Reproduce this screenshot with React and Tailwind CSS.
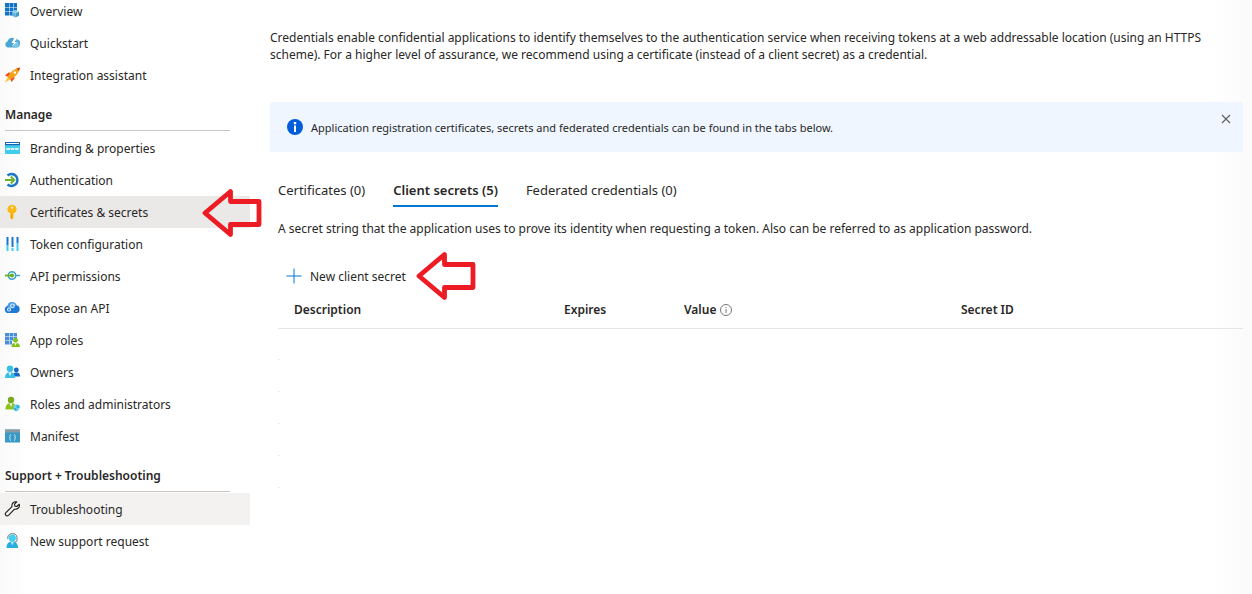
import React from 'react';
import clsx from 'clsx';

const Icon = ({ children }) => (
  <svg viewBox="0 0 16 16" className="size-4 shrink-0" aria-hidden="true">
    {children}
  </svg>
);

const OverviewIcon = () => (
  <Icon>
    <path fill="#1173c7" d="M1 0h4v4H1zM5.5 0h4v4h-4zM10 0h3v4h-3zM1 4.500h4v4H1zM5.500 4.500h4v4h-4zM10 4.500h3v3h-3zM1 9h4v3.500H1zM5.500 9H8v3.500H5.500z" />
    <path fill="#8fd0ee" d="M11.500 7l3.500 1.700-3.500 1.800L8 8.700z" />
    <path fill="#5fb4dd" d="M8 8.700l3.500 1.800V14.500L8 12.700z" />
    <path fill="#3c9bcd" d="M15 8.700l-3.500 1.800V14.500l3.500-1.800z" />
  </Icon>
);

const QuickstartIcon = () => (
  <Icon>
    <path fill="#4aa5d4" d="M4 12.500a3.100 3.100 0 0 1-.6-6A4.800 4.800 0 0 1 9.500 3L12 4.200A3.800 3.800 0 0 1 15.900 9 3.700 3.700 0 0 1 12.500 12.500z" />
    <path fill="#7cc8e8" d="M11 3.500l2 .2-.3 2.300A3.500 3.500 0 0 1 12.500 12.500H8.500L13 6.500z" />
    <path fill="#fff" d="M10.300 3L7.500 8h2.300l-2 4L12.800 7h-2.200L13 3z" />
  </Icon>
);

const RocketIcon = () => (
  <Icon>
    <path fill="#e8531f" d="M1 8.500L4.500 5.500l4 .5-4 4zM7.500 15l3-3.500-.5-4-4 4z" />
    <path fill="#f9a01b" d="M3.500 10.500C6 5 10 1.500 16 .5c-.8 5.500-4.500 9.500-10 12z" />
    <path fill="#c3421b" d="M12.500 1.500L16 .5l-1 3.500z" />
    <path fill="#ffc52d" d="M3.500 10.500l2.500 2L.8 15.500z" />
    <circle cx="10.800" cy="5.500" r="1.300" fill="#fff" />
  </Icon>
);

const BrandingIcon = () => (
  <Icon>
    <path fill="#42cdee" d="M1 2h15v12H1z" />
    <path fill="#1762b4" d="M1 2h15v3.200H1z" />
    <path fill="#fff" d="M2 3h13v1H2z" />
    <path fill="none" stroke="#fff" strokeWidth=".9" d="M2.500 8l.8 2 .8-2 .8 2 .8-2M6.800 8l.8 2 .8-2 .8 2 .8-2M11.200 8l.8 2 .8-2 .8 2 .8-2" />
  </Icon>
);

const AuthIcon = () => (
  <Icon>
    <path fill="none" stroke="#1976c8" strokeWidth="2.400" d="M3.500 3.500A6 6 0 1 1 3.500 12.500" />
    <path fill="none" stroke="#6db526" strokeWidth="2" d="M1 8h9M6.800 4.500L10.300 8l-3.500 3.500" />
  </Icon>
);

const KeyIcon = () => (
  <Icon>
    <path fill="#fcb813" d="M8 1a4.500 4.300 0 0 0-1.700 8.300V14L8 15.500 9.700 14v-1l-.9-.9.9-.9V9.300A4.500 4.300 0 0 0 8 1z" />
    <circle cx="8" cy="3.600" r="1.200" fill="#fff0c0" />
    <path stroke="#e28a05" strokeWidth=".8" d="M7.500 10v4.500" />
  </Icon>
);

const TokenIcon = () => (
  <Icon>
    <path fill="#1976d2" d="M2.500 1h2v8h-2zM7.500 1h2v10h-2zM12.500 1h2v6h-2z" />
    <path fill="#42cdee" d="M2.500 9h2v6h-2zM7.500 12h2v3h-2zM12.500 7h2v8h-2z" />
  </Icon>
);

const PermissionsIcon = () => (
  <Icon>
    <circle cx="8" cy="7.500" r="3.700" fill="#fff" stroke="#3b9fc9" strokeWidth="1.500" />
    <path stroke="#62b01e" strokeWidth="1.800" d="M1 7.500h7" />
    <path stroke="#3b9fc9" strokeWidth="1.400" d="M12 7.500h4" />
    <circle cx="8" cy="7.500" r="2" fill="#62b01e" />
  </Icon>
);

const CloudIcon = () => (
  <Icon>
    <path fill="#1f7ad6" d="M4.300 13A3.500 3.500 0 0 1 3.500 6.100 4.800 4.800 0 0 1 12.600 5.200 4 4 0 0 1 12.500 13z" />
    <path fill="#4b9ded" d="M3.500 6.100A4.800 4.800 0 0 1 12.600 5.200L9 6.500 5 9z" />
    <circle cx="8.500" cy="5.800" r="1.800" fill="none" stroke="#d6eafc" strokeWidth="1.200" />
    <circle cx="5" cy="9.500" r="1.500" fill="none" stroke="#d6eafc" strokeWidth="1.200" />
  </Icon>
);

const AppRolesIcon = () => (
  <Icon>
    <path fill="#4a8fdc" d="M1 1h4v3.500H1zM5.500 1h3.500v3.500H5.500zM9.500 1H13v3.500H9.500zM1 5h4v3.500H1zM5.500 5h3.500v3.500H5.500zM9.500 5H13v3H9.500zM1 9h4v3.500H1zM5.500 9H8v3.500H5.500z" />
    <circle cx="11.500" cy="8.200" r="2.400" fill="#7cc31a" />
    <path fill="#7cc31a" d="M7.500 15c0-3 1.500-4.300 4-4.300S16 12 16 15z" />
    <path fill="#e9f7d4" d="M10.200 10.900h2.600L11.500 14z" />
  </Icon>
);

const OwnersIcon = () => (
  <Icon>
    <circle cx="12.300" cy="6" r="2.400" fill="#1467c2" />
    <path fill="#1467c2" d="M8.500 12.500c0-2.800 1-4 3.800-4S16 9.700 16 12.500z" />
    <circle cx="6" cy="4.800" r="3.200" fill="#39bfe6" />
    <path fill="#39bfe6" d="M1 14c0-4 1.800-5.800 5-5.800s5.200 1.800 5.200 5.800z" />
    <path fill="#fff" d="M4.600 8.400h2.800L6 12z" />
  </Icon>
);

const RolesIcon = () => (
  <Icon>
    <circle cx="7" cy="4" r="3.200" fill="#7ba81c" />
    <path fill="#8cc220" d="M1.500 13.500c0-4.200 1.800-6.400 5.500-6.400s5.500 2.200 5.500 6.400z" />
    <path fill="#f2f9e0" d="M5.500 7.300h3L7 11z" />
    <path fill="#6fd3f0" d="M12.500 8.500l3 1v2.500c0 1.500-1.300 2.600-3 3.300-1.700-.7-3-1.800-3-3.300V9.500z" />
    <path fill="#35b0dc" d="M12.500 8.500l3 1v2.500h-3zM12.500 12v3.300c-1.700-.7-3-1.800-3-3.300z" />
  </Icon>
);

const ManifestIcon = () => (
  <Icon>
    <path fill="#3999c6" d="M1 1.500h15v13H1z" />
    <path fill="#8e9aa3" d="M1 1.500h15v3H1z" />
    <path fill="none" stroke="#c9e6f4" strokeWidth="1" d="M7 6.500c-1.200 0-.8 1-.9 2 0 .6-.3 1-.9 1 .6 0 .9.400.9 1 0 1-.3 2 .9 2M10 6.500c1.200 0 .8 1 .9 2 0 .6.300 1 .9 1-.6 0-.9.400-.9 1 0 1 .3 2-.9 2" />
  </Icon>
);

const WrenchIcon = () => (
  <Icon>
    <path
      fill="none"
      stroke="#1b1a19"
      strokeWidth="1.100"
      strokeLinejoin="round"
      d="M15.200 3.200L12.900 5.500 10.900 5.100 10.500 3.100 12.800.9C10 .2 7.400 2.300 8 5.600L1.900 11.700c-1.700 1.900.8 4.300 2.600 2.600L10.500 8.200c3.300.6 5.700-2.200 4.700-5z"
    />
  </Icon>
);

const SupportIcon = () => (
  <Icon>
    <path fill="none" stroke="#6d7175" strokeWidth="1" d="M3.800 6V4.500C3.800-.7 13 -.7 13 4.500V7c0 1.500-1 2-2.500 2" />
    <circle cx="8.300" cy="5" r="3.600" fill="#3fd0f2" />
    <path fill="#28aedd" d="M2.500 15c0-4 1.800-6.500 5.800-6.500s5.700 2.500 5.700 6.500z" />
    <path fill="#b9ecfa" d="M6.800 9h3l-1.500 3.500z" />
  </Icon>
);

const NAV_GROUPS = [
  {
    items: [
      { label: 'Overview', icon: OverviewIcon },
      { label: 'Quickstart', icon: QuickstartIcon },
      { label: 'Integration assistant', icon: RocketIcon },
    ],
  },
  {
    title: 'Manage',
    items: [
      { label: 'Branding & properties', icon: BrandingIcon },
      { label: 'Authentication', icon: AuthIcon },
      { label: 'Certificates & secrets', icon: KeyIcon, active: true, pointed: true },
      { label: 'Token configuration', icon: TokenIcon },
      { label: 'API permissions', icon: PermissionsIcon },
      { label: 'Expose an API', icon: CloudIcon },
      { label: 'App roles', icon: AppRolesIcon },
      { label: 'Owners', icon: OwnersIcon },
      { label: 'Roles and administrators', icon: RolesIcon },
      { label: 'Manifest', icon: ManifestIcon },
    ],
  },
  {
    title: 'Support + Troubleshooting',
    items: [
      { label: 'Troubleshooting', icon: WrenchIcon, hovered: true },
      { label: 'New support request', icon: SupportIcon },
    ],
  },
];

const TABS = [
  { label: 'Certificates (0)' },
  { label: 'Client secrets (5)', active: true },
  { label: 'Federated credentials (0)' },
];

function PointerArrow({ className }) {
  return (
    <svg viewBox="0 0 60 50" className={clsx('absolute h-[50px] w-[60px]', className)} aria-hidden="true">
      <path
        fill="none"
        stroke="#ed1c24"
        strokeWidth="4.800"
        strokeLinejoin="round"
        d="M3 25L28.500 3.500V13.500H57V36.500H28.500V46.500z"
      />
    </svg>
  );
}

function NavItem({ item }) {
  const ItemIcon = item.icon;

  return (
    <li className="relative">
      <a
        href="#"
        className={clsx(
          'flex h-8 items-center gap-2.5 pl-1',
          item.active && 'bg-[#ebe9e8]',
          item.hovered && 'bg-[#f3f2f1]'
        )}
      >
        <ItemIcon />
        <span>{item.label}</span>
      </a>
      {item.pointed && <PointerArrow className="-top-2 left-[202px]" />}
    </li>
  );
}

function Sidebar() {
  return (
    <nav className="-mt-[5px] w-[250px] shrink-0">
      {NAV_GROUPS.map((group, i) => (
        <section key={i}>
          {group.title && (
            <h2 className="mr-5 mb-px ml-[5px] flex h-10 items-center border-b border-[#c8c6c4] pt-2 font-semibold">
              {group.title}
            </h2>
          )}
          <ul>
            {group.items.map((item) => (
              <NavItem key={item.label} item={item} />
            ))}
          </ul>
        </section>
      ))}
    </nav>
  );
}

function InfoBanner() {
  return (
    <div className="mt-[39px] flex h-[50px] rounded-xs bg-[#eff6ff] pr-3 pl-[17px]">
      <div className="flex flex-1 items-center gap-2">
        <svg viewBox="0 0 16 16" className="size-4 shrink-0" aria-hidden="true">
          <circle cx="8" cy="8" r="8" fill="#015cda" />
          <path fill="#fff" d="M7 6.500h2V13H7zM6.800 3h2.400v2.200H6.800z" />
        </svg>
        <p className="text-[11px]">
          Application registration certificates, secrets and federated credentials can be found in the tabs below.
        </p>
      </div>
      <button type="button" aria-label="Close" className="mt-3 h-2.5 w-2.5">
        <svg viewBox="0 0 10 10" className="size-2.5">
          <path stroke="#605e5c" strokeWidth="1.100" d="M1 1l8 8M9 1l-8 8" />
        </svg>
      </button>
    </div>
  );
}

function SecretsTable() {
  return (
    <table className="w-full table-fixed border-collapse text-left">
      <thead>
        <tr className="h-9 border-b border-[#e6e5e4]">
          <th className="w-[286px] pl-4 font-semibold">Description</th>
          <th className="w-[120px] font-semibold">Expires</th>
          <th className="w-[277px] font-semibold">
            <span className="flex items-center gap-1">
              Value
              <svg viewBox="0 0 12 12" className="size-3" aria-hidden="true">
                <circle cx="6" cy="6" r="5.500" fill="none" stroke="#797775" />
                <path stroke="#797775" d="M6 5v4M6 3v1" />
              </svg>
            </span>
          </th>
          <th className="font-semibold">Secret ID</th>
        </tr>
      </thead>
      <tbody>
        {[1, 2, 3, 4, 5].map((row) => (
          <tr key={row} className="h-8">
            <td colSpan={4} className="align-bottom">
              <div className="h-px w-0.5 bg-[#edebe9]" />
            </td>
          </tr>
        ))}
      </tbody>
    </table>
  );
}

export default function App() {
  return (
    <div className="flex min-h-screen overflow-hidden bg-[linear-gradient(to_right,#fafafa,#fff_30px,#fff_calc(100%-40px),#fafafa)] font-['Segoe_UI','Noto_Sans',sans-serif] text-xs/[17px] text-[#292827]">
      <Sidebar />
      <main className="min-w-0 flex-1 pt-[29px] pr-[9px] pl-5">
        <p>
          Credentials enable confidential applications to identify themselves to the authentication service when
          receiving tokens at a web addressable location (using an HTTPS scheme). For a higher level of assurance, we
          recommend using a certificate (instead of a client secret) as a credential.
        </p>
        <InfoBanner />
        <div className="pl-2">
          <div role="tablist" className="mt-[30px] flex gap-7 text-[13px]/[17px]">
            {TABS.map((tab) => (
              <button
                key={tab.label}
                type="button"
                role="tab"
                aria-selected={!!tab.active}
                className={clsx(
                  'border-b-2 pb-1.5 whitespace-nowrap',
                  tab.active ? 'border-[#0078d4] font-semibold' : 'border-transparent'
                )}
              >
                {tab.label}
              </button>
            ))}
          </div>
          <p className="mt-[13px]">
            A secret string that the application uses to prove its identity when requesting a token. Also can be
            referred to as application password.
          </p>
          <div className="mt-[23px] flex pl-2">
            <button type="button" className="relative flex h-8 items-center gap-2">
              <svg viewBox="0 0 16 16" className="size-4" aria-hidden="true">
                <path stroke="#0078d4" d="M8 .5v15M.5 8h15" />
              </svg>
              New client secret
              <PointerArrow className="left-[130px]" />
            </button>
          </div>
          <SecretsTable />
        </div>
      </main>
    </div>
  );
}
